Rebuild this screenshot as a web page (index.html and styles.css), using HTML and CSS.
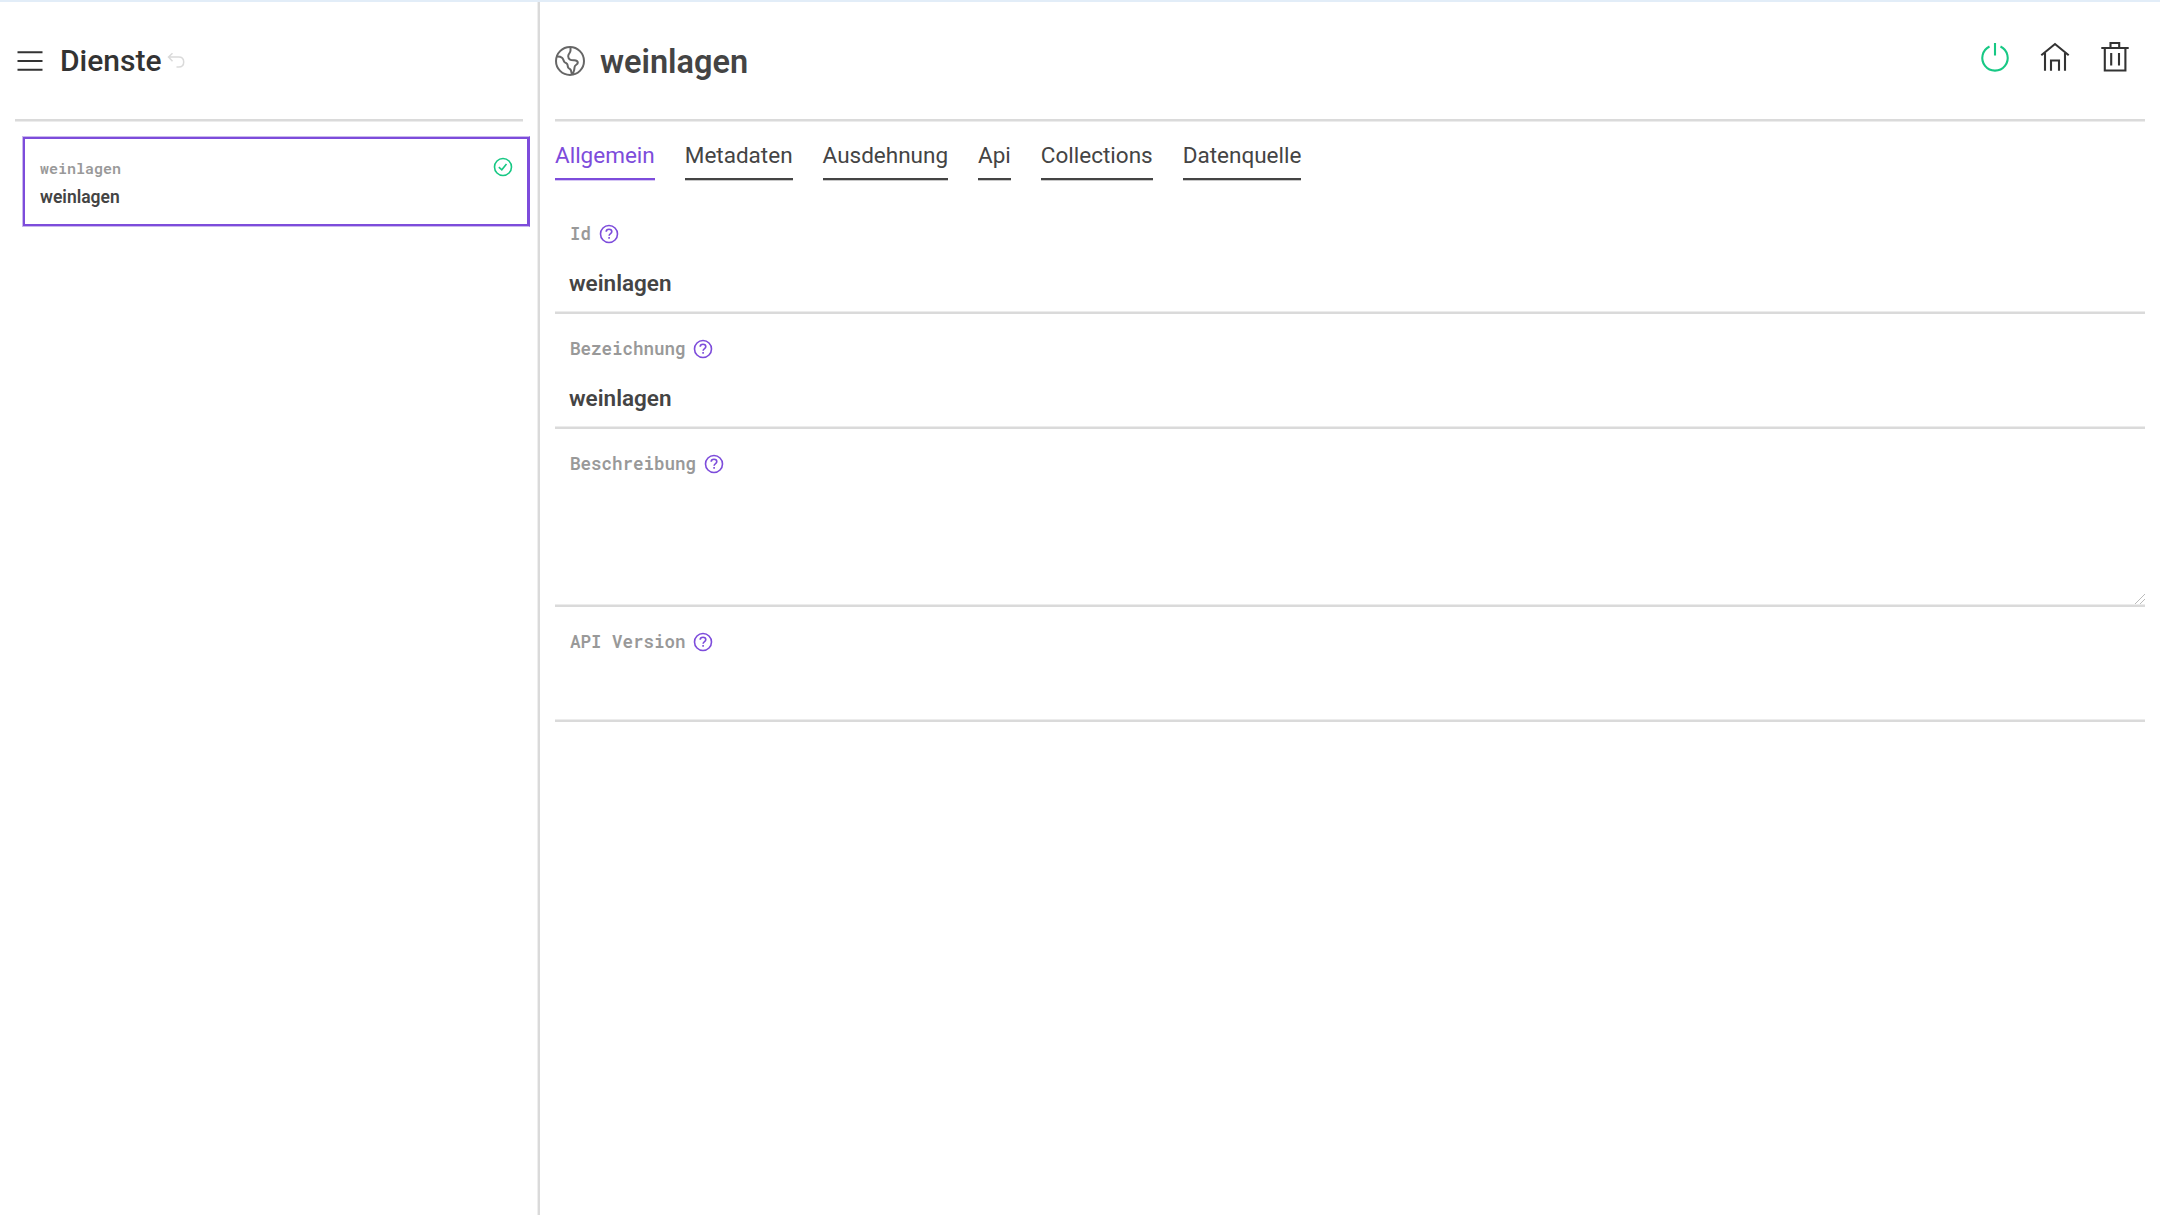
FILE: index.html
```html
<!DOCTYPE html>
<html lang="de">
<head>
<meta charset="utf-8">
<title>Dienste</title>
<link rel="stylesheet" href="styles.css">
</head>
<body>
<svg class="defs" aria-hidden="true">
  <symbol id="help" viewBox="0 0 20 20">
    <circle cx="10" cy="10" r="8.5"/>
    <path d="M7.200 7.800C7.200 6.200 8.400 5.300 10 5.300s2.800.9 2.800 2.400c0 1.800-2.700 2-2.700 4.100M10.100 13.100v1.700"/>
  </symbol>
</svg>
<div class="app">
  <aside class="sidebar">
    <header class="side-head">
      <svg class="icon menu" viewBox="0 0 26 22"><path d="M.5 2.200h25M.5 11h25M.5 19.800h25"/></svg>
      <h1 class="side-title">Dienste</h1>
      <svg class="icon undo" viewBox="0 0 18 18"><path d="M5.500 1.200 1.500 5l4 4.200M1.500 5h10.200c3.200 0 5 2 5 5s-1.800 5-5 5H9.500"/></svg>
    </header>
    <a class="card">
      <div>
        <div class="card-id">weinlagen</div>
        <div class="card-name">weinlagen</div>
      </div>
      <svg class="icon check" viewBox="0 0 20 20"><circle cx="10" cy="10" r="8.5"/><path d="m5.800 10.200 3 2.600 4.700-5.800"/></svg>
    </a>
  </aside>
  <main class="main">
    <header class="main-head">
      <svg class="icon globe" viewBox="0 0 32 32"><circle cx="16" cy="16" r="14"/><path d="M16.500 2v3.500c0 2.500-2.300 3-2.300 5.800 0 3.400 2.800 4 6 3.900 2.300 0 3.600.8 3.600 2.600 0 2-3.200 2-3.200 4.200 0 3-.9 5-2.100 8M2.500 11.500c2.400-.2 4.200.2 5.500 1.200 1.300 1 1.400 2.800 2.200 4 .9 1.300 2.600 1.400 3.200 2.800.5 1.300.1 2.300 1 3.300 1.100 1.200 2.200 1.400 2.600 2.800.3 1.300.8 2.700.8 4"/></svg>
      <h2 class="title">weinlagen</h2>
      <nav class="actions">
        <svg class="icon power" viewBox="0 0 30 30"><path d="M15 1v12.500M9.500 4.500a12.700 12.700 0 1 0 11 0"/></svg>
        <svg class="icon" viewBox="0 0 30 30"><path d="M1.300 13.300 15 2l13.700 11.300M5 11v17.700M25 11v17.700M11 28.700V18.500h8v10.200"/></svg>
        <svg class="icon" viewBox="0 0 30 30"><path d="M1.300 6H28.700M4.800 6v22.500h20.600V6M10.500 6V1h8.700v5M11.200 11v12.500M19 11v12.500"/></svg>
      </nav>
    </header>
    <nav class="tabs">
      <a class="tab active">Allgemein</a><a class="tab">Metadaten</a><a class="tab">Ausdehnung</a><a class="tab">Api</a><a class="tab">Collections</a><a class="tab">Datenquelle</a>
    </nav>
    <section class="form">
      <div class="field"><div class="label">Id<svg class="help"><use href="#help"/></svg></div><div class="value">weinlagen</div></div>
      <div class="field"><div class="label">Bezeichnung<svg class="help"><use href="#help"/></svg></div><div class="value">weinlagen</div></div>
      <div class="field area"><div class="label">Beschreibung<svg class="help"><use href="#help"/></svg></div><svg class="grip" viewBox="0 0 10 10"><path d="M0 10 10 0M5 10l5-5"/></svg></div>
      <div class="field"><div class="label">API Version<svg class="help"><use href="#help"/></svg></div></div>
    </section>
  </main>
</div>
</body>
</html>
```
FILE: styles.css
```css
* { box-sizing: border-box; }
body { margin: 0; font-family: Roboto, "Liberation Sans", sans-serif; color: #444; background: #fff; }
h1, h2 { margin: 0; }
svg { flex: none; fill: none; stroke: currentColor; stroke-width: 2; }
.defs { position: absolute; width: 0; height: 0; }
.app { display: flex; height: 1215px; border-top: 2px solid #e2edf8; }
.sidebar { width: 540px; padding: 0 15px; border-right: 2px solid #dadada; box-shadow: inset -1px 0 #efefef; }
.side-head, .main-head { height: 120px; display: flex; align-items: center; background: linear-gradient(#dadada 2px, #ececec 2px) bottom / 100% 3px no-repeat; }
.side-head { padding-bottom: 2px; }
.menu { width: 26px; height: 22px; margin: 0 17px 0 2px; color: #333; }
.side-title { font-size: 30px; line-height: 40px; font-weight: 500; color: #333; }
.undo { width: 18px; height: 18px; margin-left: 5px; color: #dadada; stroke-width: 1.5; }
.card { display: flex; justify-content: space-between; width: 508px; height: 91px; margin: 14px 0 0 7px; padding: 19px 16px 0 17px; border: 1px solid #c9b7ee; border-right-color: #7d4cdb; box-shadow: inset 0 0 0 2px #7d4cdb; }
.card-id { font: 600 15px/24px "Roboto Mono", "Liberation Mono", monospace; color: #999; }
.card-name { margin-top: 2px; font-size: 17.5px; line-height: 30px; font-weight: 600; }
.check { width: 20px; height: 20px; margin-top: 1px; color: #17c884; stroke-width: 1.6; }
.main { flex: 1; padding: 0 15px; }
.globe { width: 32px; height: 32px; margin: 0 0 2px -1px; color: #666; }
.title { margin-left: 14px; font-size: 32.5px; line-height: 42px; font-weight: 600; }
.actions { display: flex; gap: 30px; margin: 0 15px 11px auto; color: #333; }
.actions .icon { width: 30px; height: 30px; stroke-width: 2.1; }
.actions .power { color: #17c884; }
.tabs { display: flex; gap: 30px; padding-top: 16px; }
.tab { height: 42px; font-size: 22.5px; line-height: 34px; font-weight: 400; border-bottom: 2px solid #444; box-shadow: 0 1px #c8c8c8; }
.tab.active { color: #7d4cdb; border-color: #7d4cdb; box-shadow: 0 1px #d5c6f4; }
.form { padding-top: 19px; }
.field { position: relative; height: 115px; padding: 19px 14px 0 15px; background: linear-gradient(#ececec 1px, #dadada 1px) bottom / 100% 3px no-repeat; }
.area { height: 178px; }
.label { display: flex; align-items: center; gap: 7.5px; height: 31px; font: 600 17.5px/30px "Roboto Mono", "Liberation Mono", monospace; color: #999; }
.help { width: 20px; height: 20px; color: #7d4cdb; stroke-width: 1.6; }
.value { margin: 19px 0 0 -1px; font-size: 22.5px; line-height: 30px; font-weight: 600; }
.grip { position: absolute; right: 0; bottom: 3px; width: 10px; height: 10px; color: #bbb; stroke-width: 1; }
```
